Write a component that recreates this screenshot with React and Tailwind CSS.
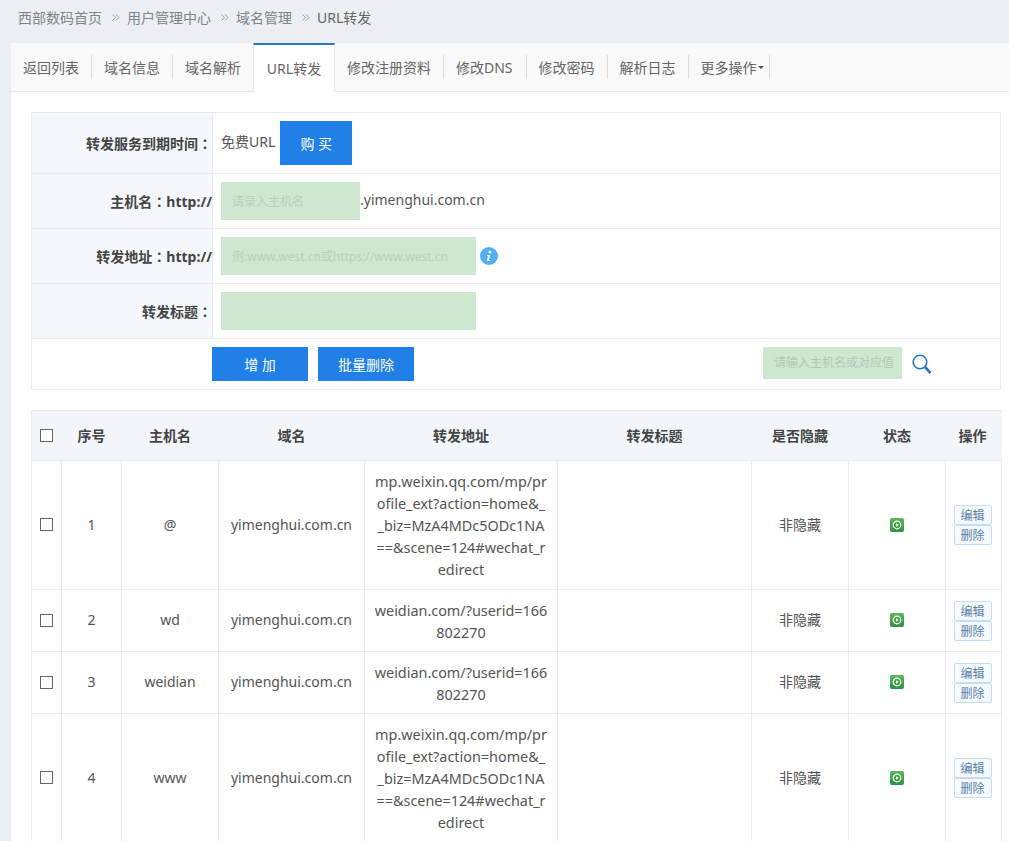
const tabs = ["返回列表","域名信息","域名解析","URL转发","修改注册资料","修改DNS","修改密码","解析日志","更多操作"];
const long = ["mp.weixin.qq.com/mp/pr","ofile_ext?action=home&_","_biz=MzA4MDc5ODc1NA","==&scene=124#wechat_r","edirect"];
const short = ["weidian.com/?userid=166","802270"];
const rows = [
  { n: 1, host: "@", addr: long, h: "h-[129px]" },
  { n: 2, host: "wd", addr: short, h: "h-[62px]" },
  { n: 3, host: "weidian", addr: short, h: "h-[62px]" },
  { n: 4, host: "www", addr: long, h: "h-[129px]" },
];
const widths = [30,60,97,146,193,194,97,97,56];
const heads = ["序号","主机名","域名","转发地址","转发标题","是否隐藏","状态","操作"];

function Check() {
  return <span className="inline-block w-[13px] h-[13px] border border-[#666] bg-white align-middle" />;
}
function Chevron() {
  return (
    <svg width="8" height="9" viewBox="0 0 8 9" className="ml-[10px] mr-[7px] shrink-0" fill="none" stroke="#9aa0a6" strokeWidth="1">
      <path d="M0.5 1.5 3.5 4.5 0.5 7.5M4 1.5 7 4.5 4 7.5" />
    </svg>
  );
}
function Colon() {
  return <span style={{ fontFamily: '"Noto Sans CJK TC",sans-serif' }}>：</span>;
}
function FormRow({ h, label, suffix, children }) {
  return (
    <div className={`flex ${h} border-b border-[#e9ebee]`}>
      <div className="w-[181px] shrink-0 bg-[#f4f7fb] border-r border-[#e9ebee] flex items-center justify-end text-[14px] font-bold text-[#444] whitespace-nowrap">{label}<Colon />{suffix}</div>
      <div className="flex-1 flex items-center pl-2 text-[#555]">{children}</div>
    </div>
  );
}
function Input({ w, ph }) {
  return <div className={`${w} h-[38px] bg-[#cde7d0] pl-[11px] pt-[2px] flex items-center text-[12px] text-[#bcd0bf] whitespace-nowrap overflow-hidden`}>{ph}</div>;
}

export default function App() {
  return (
    <div className="w-[1009px] h-[841px] overflow-hidden bg-[#ebeef3] text-[14px] text-[#555]" style={{ fontFamily: '"Noto Sans","Noto Sans CJK SC",sans-serif' }}>
      <div className="h-[43px] pl-[18px] flex items-center pb-[8px] text-[14px] text-[#808488] whitespace-nowrap">
        <span>西部数码首页</span><Chevron /><span>用户管理中心</span><Chevron /><span>域名管理</span><Chevron /><span className="text-[#666]">URL转发</span>
      </div>
      <div className="ml-[11px] bg-white h-[798px]">
        <div className="h-[49px] bg-[#f9f9f9] border-b border-[#e8e8e8] flex items-center text-[14px] text-[#666]">
          {tabs.map((t, i) => t === "URL转发" ? (
            <div key={t} className="w-[82px] h-[49px] bg-white border-t-2 border-t-[#2a78c2] border-x border-x-[#e8e8e8] flex items-center justify-center -mb-px">{t}</div>
          ) : (
            <div key={t} className={`h-[24px] flex items-center whitespace-nowrap pl-[12px] ${i === 8 ? "pr-[5px]" : i === 5 ? "pr-[13px]" : "pr-[12px]"} ${i === 2 ? "" : "border-r border-[#dedad7]"}`}>
              {t}
              {t === "更多操作" && <span className="ml-[1px] w-0 h-0 border-x-[3px] border-x-transparent border-t-[3px] border-t-[#555]" />}
            </div>
          ))}
        </div>
        <div className="px-[20px] pt-[20px]">
          <div className="w-[970px] border border-[#e9ebee]">
            <FormRow h="h-[61px]" label="转发服务到期时间">
              <span className="mr-[5px] -mt-[4px]">免费URL</span>
              <div className="w-[72px] h-[44px] bg-[#2080e8] text-white flex items-center justify-center">购 买</div>
            </FormRow>
            <FormRow h="h-[55px]" label="主机名" suffix="http://">
              <Input w="w-[139px]" ph="请录入主机名" />
              <span className="-mt-[3px] text-[14px]">.yimenghui.com.cn</span>
            </FormRow>
            <FormRow h="h-[55px]" label="转发地址" suffix="http://">
              <Input w="w-[255px]" ph="例:www.west.cn或https://www.west.cn" />
              <svg width="18" height="18" viewBox="0 0 18 18" className="ml-[4px]">
                <circle cx="9" cy="9" r="9" fill="#4fb0f5" />
                <circle cx="10" cy="5" r="1.5" fill="#fff" />
                <path d="M7 8h3.2L9 13h1.2v1H6.8L8 9H7z" fill="#fff" />
              </svg>
            </FormRow>
            <FormRow h="h-[55px]" label="转发标题">
              <Input w="w-[255px]" ph="" />
            </FormRow>
            <div className="h-[50px] flex items-center pl-[180px]">
              <div className="w-[96px] h-[34px] bg-[#2080e8] text-white flex items-center justify-center">增 加</div>
              <div className="ml-[10px] w-[96px] h-[34px] bg-[#2080e8] text-white flex items-center justify-center">批量删除</div>
              <div className="ml-[349px] mb-[2px] w-[139px] h-[32px] bg-[#cde7d0] pl-[11px] flex items-center text-[12px] text-[#b4c8b7] whitespace-nowrap">请输入主机名或对应值</div>
              <svg width="20" height="21" viewBox="0 0 20 21" className="ml-[10px]" fill="none" stroke="#2a78c2">
                <circle cx="8" cy="8" r="6.8" strokeWidth="1.6" />
                <path d="M13 13l5.5 6" strokeWidth="2.6" />
              </svg>
            </div>
          </div>
          <table className="mt-[20px] w-[970px] table-fixed border-collapse text-center text-[14px]">
            <colgroup>{widths.map((w, i) => <col key={i} style={{ width: w }} />)}</colgroup>
            <thead>
              <tr className="h-[50px] bg-[#f2f6fb] text-[#444]">
                <th className="border border-[#e9ebee] border-r-0 font-bold pb-[4px]"><Check /></th>
                {heads.map((t) => <th key={t} className={`border-y border-[#e9ebee] font-bold ${t === "操作" ? "pr-[2px]" : ""}`}>{t}</th>)}
              </tr>
            </thead>
            <tbody>
              {rows.map((r) => (
                <tr key={r.n} className={r.h}>
                  <td className="border border-[#e9ebee] pb-[4px]"><Check /></td>
                  <td className="border border-[#e9ebee] pb-[2px]">{r.n}</td>
                  <td className="border border-[#e9ebee] pb-[2px]">{r.host}</td>
                  <td className="border border-[#e9ebee] pb-[2px] whitespace-nowrap">yimenghui.com.cn</td>
                  <td className="border border-[#e9ebee] pt-[2px] text-[14.4px] leading-[22px] whitespace-nowrap">
                    {r.addr.map((a) => <div key={a}>{a}</div>)}
                  </td>
                  <td className="border border-[#e9ebee]" />
                  <td className="border border-[#e9ebee] pb-[2px]">非隐藏</td>
                  <td className="border border-[#e9ebee] pb-[4px]">
                    <span className="inline-flex w-[14px] h-[14px] rounded-[2px] bg-gradient-to-b from-[#5cb85c] to-[#2f8f3f] items-center justify-center align-middle">
                      <svg width="10" height="10" viewBox="0 0 10 10" fill="none">
                        <circle cx="5" cy="5" r="3.8" stroke="#fff" strokeWidth="1.2" />
                        <path d="M4 3.2 6.6 5 4 6.8z" fill="#fff" />
                      </svg>
                    </span>
                  </td>
                  <td className="border border-[#e9ebee] pr-[2px]">
                    <div className="flex flex-col items-center">
                      <span className="w-[38px] h-[20px] border border-[#c4ddf5] bg-[#f5faff] rounded-[2px] text-[12px] leading-[20px] text-[#5a7fa8]">编辑</span>
                      <span className="w-[38px] h-[20px] border border-[#c4ddf5] bg-[#f5faff] rounded-[2px] text-[12px] leading-[20px] text-[#5a7fa8]">删除</span>
                    </div>
                  </td>
                </tr>
              ))}
            </tbody>
          </table>
        </div>
      </div>
    </div>
  );
}
